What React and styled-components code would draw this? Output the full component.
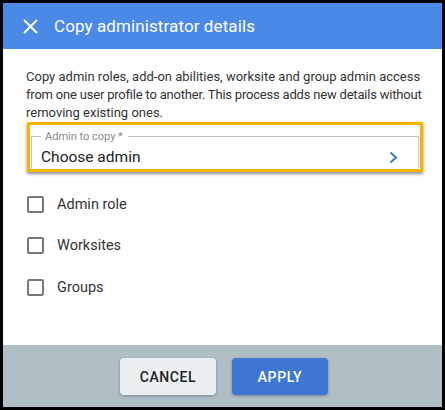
import React from "react";
import styled, { createGlobalStyle } from "styled-components";

const Global = createGlobalStyle`
  html, body { margin: 0; padding: 0; background: #000; }
  body { font-family: Roboto, "Liberation Sans", Arial, sans-serif; }
  * { box-sizing: border-box; }
`;

const Frame = styled.div`
  width: 445px;
  height: 410px;
  border: 3px solid #000;
  background: #fff;
  display: flex;
  flex-direction: column;
`;

const Header = styled.header`
  height: 46px;
  flex: none;
  background: #4a89e6;
  display: flex;
  align-items: center;
  padding-left: 19px;
  gap: 16px;
  color: #fff;
`;

const CloseBtn = styled.button`
  width: 16px;
  height: 16px;
  padding: 0;
  border: 0;
  background: transparent;
  display: flex;
  align-items: center;
  justify-content: center;
  cursor: pointer;
`;

const Title = styled.h1`
  margin: 0;
  font-size: 17px;
  font-weight: 400;
  letter-spacing: 0.1px;
`;

const Body = styled.main`
  flex: 1;
  padding: 19px 8px 0 23px;
`;

const Intro = styled.p`
  margin: 0;
  font-size: 13px;
  line-height: 18px;
  color: #333;
  white-space: nowrap;
  display: flex;
  flex-direction: column;
`;

const Line = styled.span`
  letter-spacing: ${(p) => p.$spacing || 0}px;
`;

const FocusRing = styled.div`
  margin-left: 1px;
  margin-right: 11px;
  border: 3px solid #f7b500;
  padding: 5px 1px 0 1px;
  box-shadow: 0 2px 3px rgba(0, 0, 0, 0.45);
`;

const Fieldset = styled.fieldset`
  margin: 0;
  padding: 3px 20px 0 9px;
  border: 1px solid #c4c4c4;
  border-bottom-color: #fff;
  border-right-color: #d8d8d8;
  display: flex;
  align-items: center;
  justify-content: space-between;
  cursor: pointer;
`;

const Legend = styled.legend`
  padding: 0 5px 0 4px;
  font-size: 11px;
  line-height: 13px;
  color: #8a8a8a;
`;

const Value = styled.span`
  font-size: 15.5px;
  color: #222;
  line-height: 22px;
`;

const Options = styled.ul`
  list-style: none;
  margin: 20px 0 0 0;
  padding: 0;
  display: flex;
  flex-direction: column;
  gap: 17.5px;
`;

const Option = styled.li`
  display: flex;
  align-items: center;
  gap: 13px;
  height: 24px;
  font-size: 14.5px;
  color: #333;
  margin-left: 1px;
`;

const Box = styled.span`
  width: 17px;
  height: 17px;
  border: 2px solid #777;
  border-radius: 2px;
  background: #fff;
  flex: none;
`;

const Footer = styled.footer`
  height: 62px;
  flex: none;
  background: #b0bec5;
  display: flex;
  justify-content: center;
  align-items: flex-start;
  padding-top: 13px;
  padding-left: 3px;
  gap: 16px;
`;

const Button = styled.button`
  width: 96px;
  height: 37px;
  border: 0;
  border-radius: 4px;
  font-family: inherit;
  font-size: 14px;
  font-weight: 500;
  letter-spacing: 0.6px;
  background: ${(p) => (p.$primary ? "#3e77d3" : "#eceff1")};
  color: ${(p) => (p.$primary ? "#fff" : "#222")};
  box-shadow: 0 1px 3px rgba(0, 0, 0, 0.3);
  cursor: pointer;
`;

const options = ["Admin role", "Worksites", "Groups"];

const introLines = [
  { text: "Copy admin roles, add-on abilities, worksite and group admin access", spacing: 0 },
  { text: "from one user profile to another. This process adds new details without", spacing: -0.2 },
  { text: "removing existing ones.", spacing: 0 },
];

export default function App() {
  return (
    <>
      <Global />
      <Frame>
        <Header>
          <CloseBtn aria-label="Close">
            <svg width="15" height="15" viewBox="0 0 15 15">
              <path d="M1 1 L14 14 M14 1 L1 14" stroke="#fff" strokeWidth="2" />
            </svg>
          </CloseBtn>
          <Title>Copy administrator details</Title>
        </Header>
        <Body>
          <Intro>
            {introLines.map((l) => (
              <Line key={l.text} $spacing={l.spacing}>
                {l.text}
              </Line>
            ))}
          </Intro>
          <FocusRing>
            <Fieldset>
              <Legend>Admin to copy *</Legend>
              <Value>Choose admin</Value>
              <svg width="9" height="13" viewBox="0 0 9 13">
                <path d="M1.5 1.5 L7 6.5 L1.5 11.5" stroke="#3e77d3" strokeWidth="2" fill="none" />
              </svg>
            </Fieldset>
          </FocusRing>
          <Options>
            {options.map((o) => (
              <Option key={o}>
                <Box />
                {o}
              </Option>
            ))}
          </Options>
        </Body>
        <Footer>
          <Button>CANCEL</Button>
          <Button $primary>APPLY</Button>
        </Footer>
      </Frame>
    </>
  );
}
